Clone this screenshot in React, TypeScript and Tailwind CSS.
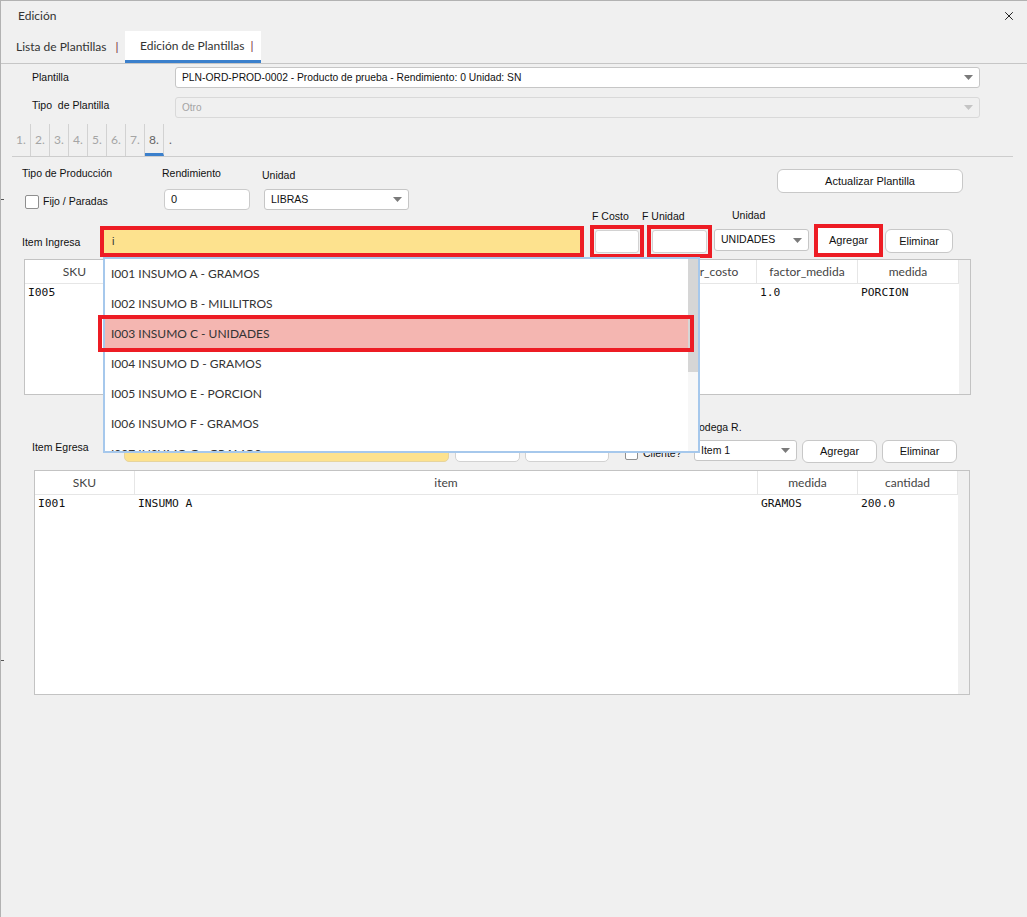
import { X } from "lucide-react";

const lato = "font-['Lato',sans-serif]";
const arial = "font-['Liberation_Sans',Arial,sans-serif]";
const mono = "font-['DejaVu_Sans_Mono',monospace]";

type Col = { label: string; w: string };

const ingresaCols: Col[] = [
  { label: "SKU", w: "w-[100px]" },
  { label: "item", w: "w-[530px]" },
  { label: "factor_costo", w: "w-[102px]" },
  { label: "factor_medida", w: "w-[101px]" },
  { label: "medida", w: "w-[101px]" },
];
const ingresaRows = [["I005", "INSUMO E", "1.0", "1.0", "PORCION"]];

const egresaCols: Col[] = [
  { label: "SKU", w: "w-[100px]" },
  { label: "item", w: "w-[623px]" },
  { label: "medida", w: "w-[100px]" },
  { label: "cantidad", w: "w-[100px]" },
];
const egresaRows = [["I001", "INSUMO A", "GRAMOS", "200.0"]];

const options = [
  "I001 INSUMO A - GRAMOS",
  "I002 INSUMO B - MILILITROS",
  "I003 INSUMO C - UNIDADES",
  "I004 INSUMO D - GRAMOS",
  "I005 INSUMO E - PORCION",
  "I006 INSUMO F - GRAMOS",
  "I007 INSUMO G - GRAMOS",
];

function Caret({ light }: { light?: boolean }) {
  return (
    <svg width="9" height="5" viewBox="0 0 9 5">
      <path d="M0 0h9L4.5 5z" fill={light ? "#c4c4c4" : "#7a7a7a"} />
    </svg>
  );
}

function Select({
  value,
  className,
  disabled,
  textClass = "text-[10px]",
}: {
  value: string;
  className: string;
  disabled?: boolean;
  textClass?: string;
}) {
  return (
    <div
      className={`flex items-center justify-between border rounded-[3px] pl-[6px] pr-[6px] ${arial} ${
        disabled
          ? "bg-[#f0f0f0] border-[#d9d9d9] text-[#a3a3a3]"
          : "bg-white border-[#c6c6c6] text-[#111]"
      } ${className}`}
    >
      <span className={textClass}>{value}</span>
      <Caret light={disabled} />
    </div>
  );
}

function Btn({ label, className }: { label: string; className: string }) {
  return (
    <div
      className={`flex items-center justify-center bg-white border border-[#c8c8c8] rounded-[6px] text-[11px] text-[#111] ${arial} ${className}`}
    >
      {label}
    </div>
  );
}

function Grid({
  cols,
  rows,
  className,
}: {
  cols: Col[];
  rows: string[][];
  className: string;
}) {
  return (
    <div className={`flex bg-white border border-[#c3c3c3] ${className}`}>
      <div className="flex flex-col">
        <div className="flex h-[24px] border-b border-[#e6e6e6]">
          {cols.map((c) => (
            <div
              key={c.label}
              className={`${c.w} flex items-center justify-center border-r border-[#e6e6e6] text-[12px] text-[#444] ${lato}`}
            >
              {c.label}
            </div>
          ))}
        </div>
        {rows.map((r, i) => (
          <div key={i} className="flex h-[19px] items-center">
            {r.map((v, j) => (
              <div
                key={j}
                className={`${cols[j].w} pl-[3px] text-[11.3px] text-[#111] ${mono}`}
              >
                {v}
              </div>
            ))}
          </div>
        ))}
      </div>
      <div className="flex-1 bg-[#f0f0f0]" />
    </div>
  );
}

export default function App() {
  const label = `text-[10.5px] text-[#111] ${arial}`;

  return (
    <div className="relative w-[1027px] h-[917px] overflow-hidden bg-[#f0f0f0] border-t border-l border-[#b2b2b2]">
      {/* title */}
      <div className="flex h-[29px] items-center justify-between pl-[17px] pr-[11px]">
        <span className={`text-[12px] text-[#333] ${lato}`}>Edición</span>
        <X className="w-[14px] h-[14px] text-[#111]" strokeWidth={1.6} />
      </div>

      {/* tab bar */}
      <div className={`flex h-[34px] items-end border-b border-[#c6c6c6] text-[12px] text-[#333] ${lato}`}>
        <div className="flex h-[32px] w-[124px] items-center pl-[15px]">
          Lista de Plantillas<span className="ml-[9px] text-[#6e1a37]">|</span>
        </div>
        <div className="flex h-[32px] w-[136px] items-center bg-white border-b-[3px] border-[#3b80cc] pl-[15px]">
          Edición de Plantillas<span className="ml-[6px] text-[#6e1a37]">|</span>
        </div>
      </div>

      {/* plantilla */}
      <div className="pl-[31px]">
        <div className="mt-[3px] flex h-[21px] items-center">
          <span className={`w-[143px] ${label}`}>Plantilla</span>
          <Select
            value="PLN-ORD-PROD-0002 - Producto de prueba - Rendimiento: 0 Unidad: SN"
            className="w-[805px] h-[21px]"
            textClass="text-[10.3px]"
          />
        </div>
        <div className="mt-[9px] flex h-[21px] items-start">
          <span className={`w-[143px] pt-[1px] ${label}`}>Tipo&nbsp; de Plantilla</span>
          <Select value="Otro" disabled className="w-[805px] h-[21px]" />
        </div>
      </div>

      {/* steps */}
      <div className={`ml-[11px] mt-[6px] flex h-[33px] w-[1001px] border-b border-[#cdcdcd] text-[12px] ${lato}`}>
        {["1.", "2.", "3.", "4.", "5.", "6.", "7.", "8."].map((s) => (
          <div
            key={s}
            className={`flex w-[19px] items-center justify-center border-r border-[#d2d2d2] ${
              s === "8."
                ? "border-b-[3px] border-b-[#3b80cc] pt-[3px] text-[#666]"
                : "text-[#a5a5a5]"
            }`}
          >
            {s}
          </div>
        ))}
        <div className="flex items-center pl-[5px] text-[#666]">.</div>
      </div>

      {/* produccion */}
      <div className="flex h-[53px] pl-[21px]">
        <div className="flex w-[140px] flex-col">
          <span className={`mt-[10px] leading-[12px] ${label}`}>Tipo de Producción</span>
          <div className="mt-[15px] ml-[3px] flex items-center">
            <div className="w-[14px] h-[14px] bg-white border border-[#8f8f8f] rounded-[2px]" />
            <span className={`ml-[4px] ${label}`}>Fijo / Paradas</span>
          </div>
        </div>
        <div className="flex w-[100px] flex-col">
          <span className={`mt-[10px] leading-[12px] ${label}`}>Rendimiento</span>
          <div
            className={`mt-[10px] ml-[2px] flex h-[23px] w-[86px] items-center bg-white border border-[#cbcbcb] rounded-[4px] pl-[6px] text-[11px] text-[#111] ${arial}`}
          >
            0
          </div>
        </div>
        <div className="flex w-[515px] flex-col">
          <span className={`mt-[12px] leading-[12px] ${label}`}>Unidad</span>
          <Select value="LIBRAS" className="mt-[8px] ml-[2px] w-[145px] h-[21px]" textClass="text-[10.5px]" />
        </div>
        <Btn label="Actualizar Plantilla" className="mt-[12px] w-[186px] h-[24px]" />
      </div>

      {/* labels above ingresa */}
      <div className={`flex h-[14px] items-center pl-[591px] ${label}`}>
        <span className="w-[50px]">F Costo</span>
        <span className="w-[90px]">F Unidad</span>
        <span className="-mt-[3px]">Unidad</span>
      </div>

      {/* ingresa row */}
      <div className="flex h-[34px] items-start pl-[21px]">
        <span className={`mt-[12px] w-[78px] leading-[12px] ${label}`}>Item Ingresa</span>
        <div className="mt-[2px] h-[31px] w-[484px] border-[4px] border-[#ed1c24]">
          <div className={`flex h-full items-center bg-[#fde28e] pl-[8px] text-[11px] text-[#333] ${arial}`}>
            i
          </div>
        </div>
        <div className="ml-[6px] mt-[1px] h-[33px] w-[54px] border-[4px] border-[#ed1c24] p-[1px]">
          <div className="h-full bg-white border border-[#d2d2d2] rounded-[3px]" />
        </div>
        <div className="ml-[3px] mt-[1px] h-[33px] w-[65px] border-[4px] border-[#ed1c24] p-[1px]">
          <div className="h-full bg-white border border-[#d2d2d2] rounded-[3px]" />
        </div>
        <Select value="UNIDADES" className="ml-[2px] mt-[5px] w-[95px] h-[22px]" textClass="text-[10.5px]" />
        <div className="ml-[5px] h-[33px] w-[69px] border-[4px] border-[#ed1c24]">
          <div className={`flex h-full items-center justify-center bg-white text-[11px] text-[#111] ${arial}`}>
            Agregar
          </div>
        </div>
        <Btn label="Eliminar" className="ml-[2px] mt-[5px] w-[68px] h-[24px]" />
      </div>

      <Grid cols={ingresaCols} rows={ingresaRows} className="ml-[23px] mt-[1px] w-[947px] h-[136px]" />

      {/* egresa */}
      <div className={`pl-[691px] pt-[26px] leading-[12px] ${label}`}>Bodega R.</div>
      <div className="mt-[4px] flex h-[26px] items-start pl-[31px]">
        <span className={`mt-[4px] w-[92px] leading-[12px] ${label}`}>Item Egresa</span>
        <div className="h-[25px] w-[325px] bg-[#fde28e] border border-[#e6d49e] rounded-[5px]" />
        <div className="ml-[6px] h-[25px] w-[65px] bg-white border border-[#d2d2d2] rounded-[5px]" />
        <div className="ml-[5px] h-[25px] w-[84px] bg-white border border-[#d2d2d2] rounded-[5px]" />
        <div className="ml-[16px] mt-[9px] flex w-[69px] items-center">
          <div className="w-[13px] h-[13px] bg-white border border-[#8f8f8f] rounded-[2px]" />
          <span className={`ml-[5px] ${label}`}>Cliente?</span>
        </div>
        <Select value="Item 1" className="mt-[3px] w-[103px] h-[21px]" textClass="text-[10.5px]" />
        <Btn label="Agregar" className="ml-[5px] mt-[3px] w-[75px] h-[23px]" />
        <Btn label="Eliminar" className="ml-[5px] mt-[3px] w-[75px] h-[23px]" />
      </div>

      <Grid cols={egresaCols} rows={egresaRows} className="ml-[33px] mt-[7px] w-[936px] h-[225px]" />

      {/* autocomplete list */}
      <div className="absolute left-[102px] top-[256px] w-[597px] h-[196px] bg-white border-2 border-[#a6c8ec] overflow-hidden">
        {options.map((o, i) => (
          <div
            key={o}
            className={`flex h-[30px] items-center pl-[6px] text-[12px] text-[#333] ${lato} ${
              i === 2 ? "bg-[#f4b6b1]" : ""
            }`}
          >
            {o}
          </div>
        ))}
        <div className="absolute right-0 top-0 bottom-0 w-[10px] bg-[#f7f7f7]">
          <div className="h-[113px] bg-[#d6d6d6]" />
        </div>
      </div>
      <div className="absolute left-[97px] top-[314px] w-[596px] h-[37px] border-[4px] border-[#ed1c24]" />

      <div className="absolute left-0 top-[198px] w-[3px] h-px bg-[#555]" />
      <div className="absolute left-0 top-[659px] w-[3px] h-px bg-[#555]" />
    </div>
  );
}
